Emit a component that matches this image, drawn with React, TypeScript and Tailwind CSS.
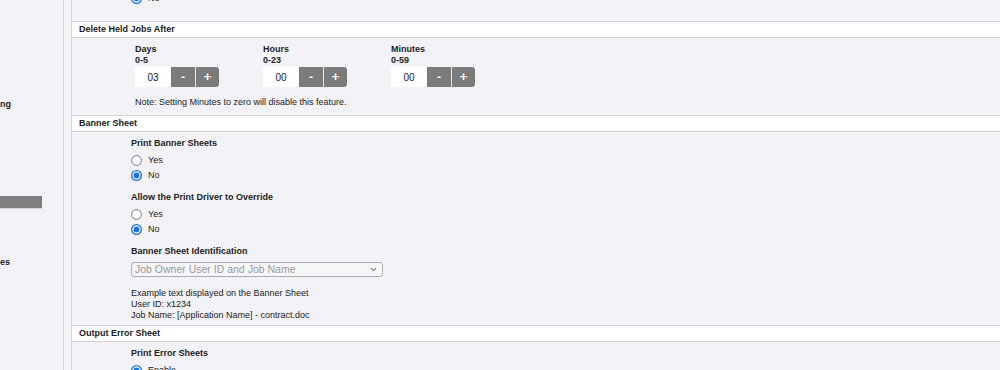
import React from "react";

function Radio({ checked }: { checked?: boolean }) {
  return (
    <svg width="11" height="11" viewBox="0 0 11 11" className="shrink-0">
      {checked ? (
        <>
          <circle cx="5.5" cy="5.5" r="4.85" fill="#ffffff" stroke="#1a73e8" strokeWidth="1.3" />
          <circle cx="5.5" cy="5.5" r="2.9" fill="#1a73e8" />
        </>
      ) : (
        <circle cx="5.5" cy="5.5" r="4.9" fill="#ffffff" stroke="#767676" strokeWidth="1" />
      )}
    </svg>
  );
}

function RadioRow({ label, checked }: { label: string; checked?: boolean }) {
  return (
    <div className="flex h-[15px] items-center gap-[6px]">
      <Radio checked={checked} />
      <span className="leading-[11px]">{label}</span>
    </div>
  );
}

function Header({ title }: { title: string }) {
  return (
    <div className="flex h-[17px] shrink-0 items-center border-y border-[#d5d5d9] bg-white pl-[7px] font-bold text-[#1a1a1a]">
      {title}
    </div>
  );
}

function Spinner({ label, range, value }: { label: string; range: string; value: string }) {
  return (
    <div className="flex w-[84px] flex-col">
      <div className="font-bold leading-[11px]">{label}</div>
      <div className="font-bold leading-[11px]">{range}</div>
      <div className="mt-[1px] flex h-[20px]">
        <div className="flex w-[36px] items-center justify-center rounded-l-[3px] bg-white text-[10px] text-[#222]">
          {value}
        </div>
        <div className="flex w-[24px] items-center justify-center bg-[#7b7b7b] text-[12px] font-bold text-white">
          -
        </div>
        <div className="w-[1px] bg-[#e9e9ee]" />
        <div className="flex w-[23px] items-center justify-center rounded-r-[3px] bg-[#7b7b7b] text-[13px] font-bold text-white">
          +
        </div>
      </div>
    </div>
  );
}

export default function App() {
  return (
    <div className="flex h-[370px] w-[1000px] overflow-hidden bg-[#f3f2f7] font-['Liberation_Sans',Arial,sans-serif] text-[9px] text-[#222]">
      <aside className="w-[64px] shrink-0 border-r border-[#d5d5d9]">
        <div className="h-[98px]" />
        <div className="font-bold leading-[12px] text-[#222]">ng</div>
        <div className="h-[86px]" />
        <div className="h-[13px] w-[42px] border-b border-[#d6d6da] bg-[#7f7f7f]" />
        <div className="h-[47px]" />
        <div className="font-bold leading-[12px] text-[#223]">es</div>
      </aside>
      <div className="w-[7px] shrink-0" />
      <main className="min-w-0 flex-1 border-l border-[#d5d5d9]">
        <div className="h-[21px] overflow-hidden">
          <div className="-mt-[9px] pl-[59px]">
            <RadioRow label="No" checked />
          </div>
        </div>

        <Header title="Delete Held Jobs After" />
        <div className="flex h-[77px] flex-col pl-[63px] pt-[6px]">
          <div className="flex gap-[44px]">
            <Spinner label="Days" range="0-5" value="03" />
            <Spinner label="Hours" range="0-23" value="00" />
            <Spinner label="Minutes" range="0-59" value="00" />
          </div>
          <div className="mt-[10px] leading-[11px]">
            Note: Setting Minutes to zero will disable this feature.
          </div>
        </div>

        <Header title="Banner Sheet" />
        <div className="flex h-[193px] flex-col pl-[59px] pt-[6px]">
          <div className="font-bold leading-[11px]">Print Banner Sheets</div>
          <div className="mt-[4px]">
            <RadioRow label="Yes" />
            <RadioRow label="No" checked />
          </div>
          <div className="mt-[9px] font-bold leading-[11px]">Allow the Print Driver to Override</div>
          <div className="mt-[4px]">
            <RadioRow label="Yes" />
            <RadioRow label="No" checked />
          </div>
          <div className="mt-[9px] font-bold leading-[11px]">Banner Sheet Identification</div>
          <div className="mt-[5px] flex h-[15px] w-[252px] items-center justify-between rounded-[3px] border border-[#acacb0] bg-[#f6f6f9] pl-[3px] pr-[5px]">
            <span className="text-[10.5px] leading-[13px] text-[#9a9a9a]">Job Owner User ID and Job Name</span>
            <svg width="7" height="5" viewBox="0 0 7 5">
              <polyline points="1,1.2 3.5,3.6 6,1.2" fill="none" stroke="#777" strokeWidth="1.1" />
            </svg>
          </div>
          <div className="mt-[11px] leading-[11px]">
            <div>Example text displayed on the Banner Sheet</div>
            <div>User ID: x1234</div>
            <div>Job Name: [Application Name] - contract.doc</div>
          </div>
        </div>

        <Header title="Output Error Sheet" />
        <div className="flex flex-col pl-[59px] pt-[6px]">
          <div className="font-bold leading-[11px]">Print Error Sheets</div>
          <div className="mt-[4px]">
            <RadioRow label="Enable" checked />
          </div>
        </div>
      </main>
    </div>
  );
}
